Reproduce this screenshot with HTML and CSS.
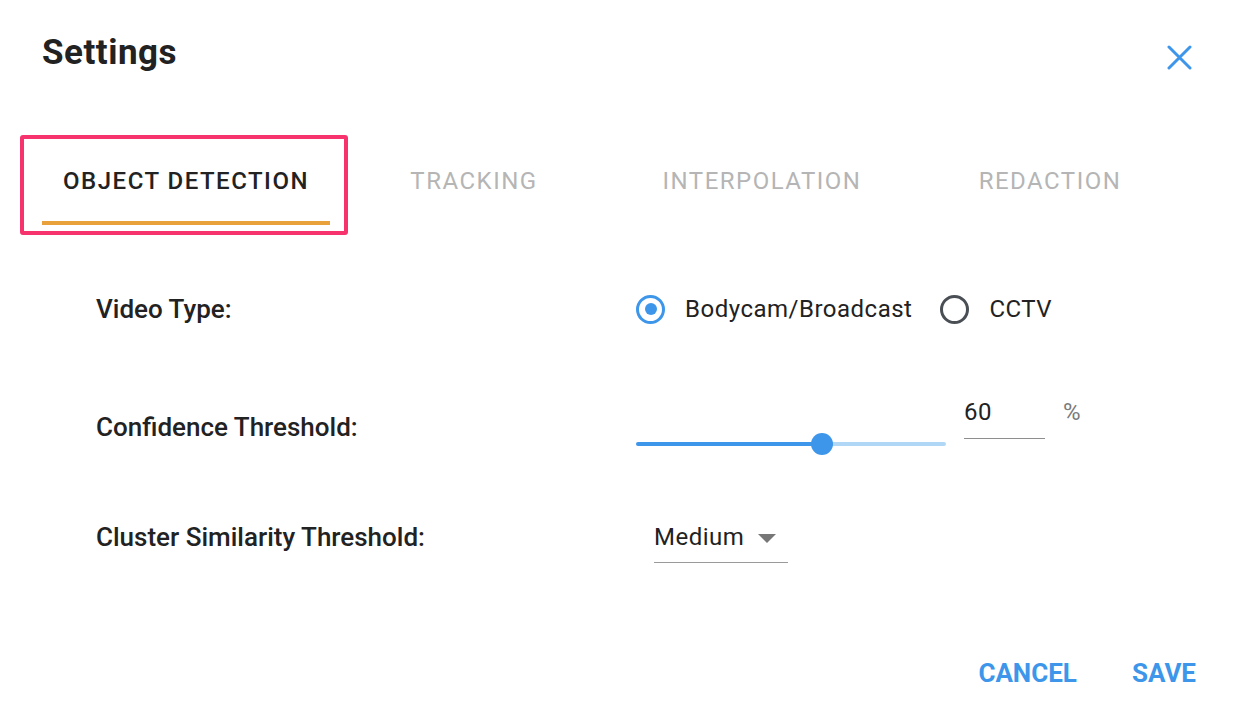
FILE: index.html
```html
<!DOCTYPE html>
<html lang="en">
<head>
<meta charset="utf-8">
<title>Settings</title>
<link rel="stylesheet" href="styles.css">
</head>
<body>
<div class="dialog">
  <header class="head">
    <h1 class="title">Settings</h1>
    <button class="close" aria-label="Close">
      <svg width="25" height="25" viewBox="0 0 25 25"><path d="M2 2 L23 23 M23 2 L2 23" stroke="#3d96ea" stroke-width="3" stroke-linecap="round" fill="none"/></svg>
    </button>
  </header>

  <nav class="tabs">
    <div class="tab active">OBJECT DETECTION<span class="focus-ring"></span></div>
    <div class="tab">TRACKING</div>
    <div class="tab">INTERPOLATION</div>
    <div class="tab">REDACTION</div>
  </nav>

  <div class="form">
    <div class="row row-type">
      <div class="label">Video Type:</div>
      <div class="radios">
        <label class="radio checked"><span class="dot"></span><span class="rtext">Bodycam/Broadcast</span></label>
        <label class="radio"><span class="dot"></span><span class="rtext">CCTV</span></label>
      </div>
    </div>
    <div class="row row-conf">
      <div class="label">Confidence Threshold:</div>
      <div class="conf">
        <div class="slider">
          <div class="track">
            <div class="fill" style="width:60%"></div>
            <div class="rest"></div>
          </div>
          <span class="thumb" style="left:60%"></span>
        </div>
        <div class="num">60</div>
        <div class="pct">%</div>
      </div>
    </div>
    <div class="row row-cluster">
      <div class="label">Cluster Similarity Threshold:</div>
      <div class="select">
        <span class="sel-text">Medium</span>
        <span class="arrow"></span>
      </div>
    </div>
  </div>

  <footer class="actions">
    <button class="btn">CANCEL</button>
    <button class="btn">SAVE</button>
  </footer>
</div>
</body>
</html>
```

FILE: styles.css
```css
* { box-sizing: border-box; }
html, body { margin: 0; padding: 0; background: #fff; }
body {
  font-family: Roboto, "Liberation Sans", Arial, sans-serif;
  color: #222;
}
.dialog {
  width: 1234px;
  height: 710px;
  display: flex;
  flex-direction: column;
  padding: 0 0 0 42px;
}
.head {
  display: flex;
  justify-content: space-between;
  align-items: flex-start;
  padding-right: 31px;
}
.title {
  margin: 33px 0 0 0;
  font-size: 35px;
  line-height: 40px;
  font-weight: 700;
  letter-spacing: 0.5px;
  color: #222;
}
.close {
  margin-top: 33px;
  width: 48px;
  height: 48px;
  border: 0;
  background: transparent;
  padding: 0;
  display: flex;
  align-items: center;
  justify-content: center;
}
.tabs {
  display: flex;
  margin-top: 59px;
}
.tab {
  position: relative;
  width: 288px;
  height: 85px;
  border-bottom: 4px solid transparent;
  display: flex;
  align-items: center;
  justify-content: center;
  font-size: 24px;
  letter-spacing: 1.5px;
  color: #b5b5b5;
  font-weight: 400;
}
.tab.active {
  color: #222;
  font-weight: 500;
  border-bottom-color: #e9a23b;
}
.focus-ring {
  position: absolute;
  left: -22px;
  right: -18px;
  top: -5px;
  bottom: -14px;
  border: 4px solid #f7336d;
  border-radius: 3px;
}
.form {
  padding-left: 54px;
  margin-top: 34px;
}
.row {
  display: grid;
  grid-template-columns: 540px 1fr;
  align-items: center;
}
.row-type { height: 100px; }
.row-conf { height: 136px; }
.row-cluster { height: 84px; align-items: start; padding-top: 28px; }
.label {
  font-size: 26px;
  line-height: 28px;
  font-weight: 500;
  color: #222;
}
.radios {
  display: flex;
  align-items: center;
}
.radio {
  display: flex;
  align-items: center;
  gap: 20px;
  margin-right: 28px;
  font-size: 24px;
  letter-spacing: 0.5px;
  line-height: 28px;
  color: #222;
}
.dot {
  width: 29px;
  height: 29px;
  border-radius: 50%;
  border: 3px solid #4a4f55;
  position: relative;
  flex: none;
}
.radio.checked .dot {
  border-color: #3d96ea;
}
.radio.checked .dot::after {
  content: "";
  position: absolute;
  left: 5.5px;
  top: 5.5px;
  width: 12px;
  height: 12px;
  border-radius: 50%;
  background: #3d96ea;
}
.conf {
  display: flex;
  align-items: flex-start;
}
.slider {
  position: relative;
  width: 310px;
  height: 22px;
  margin-top: 34px;
  display: flex;
  align-items: center;
}
.track {
  display: flex;
  width: 100%;
  height: 4px;
  border-radius: 2px;
  overflow: hidden;
}
.fill { background: #3d96ea; }
.rest { flex: 1; background: #b1d7f7; }
.thumb {
  position: absolute;
  top: 0;
  width: 22px;
  height: 22px;
  margin-left: -11px;
  border-radius: 50%;
  background: #3d96ea;
}
.num {
  margin-left: 18px;
  width: 81px;
  font-size: 24px;
  letter-spacing: 0.5px;
  line-height: 26px;
  padding-bottom: 13px;
  border-bottom: 1px solid #8e8e8e;
  color: #222;
}
.pct {
  margin-left: 18px;
  font-size: 24px;
  line-height: 26px;
  color: #7a7a7a;
}
.select {
  margin-left: 18px;
  width: 134px;
  display: flex;
  align-items: center;
  padding-bottom: 11px;
  border-bottom: 1px solid #9a9a9a;
}
.sel-text {
  font-size: 24px;
  letter-spacing: 0.5px;
  line-height: 28px;
  color: #222;
}
.arrow {
  margin-left: 14px;
  margin-top: 3px;
  width: 0;
  height: 0;
  border-left: 9px solid transparent;
  border-right: 9px solid transparent;
  border-top: 9px solid #777;
}
.actions {
  margin-top: auto;
  display: flex;
  justify-content: flex-end;
  gap: 27px;
  padding: 0 24px 17px 0;
}
.btn {
  border: 0;
  background: transparent;
  font-family: Roboto, "Liberation Sans", Arial, sans-serif;
  font-size: 26px;
  line-height: 24px;
  font-weight: 700;
  letter-spacing: 0px;
  color: #3d96ea;
  padding: 8px 14px;
}
```
